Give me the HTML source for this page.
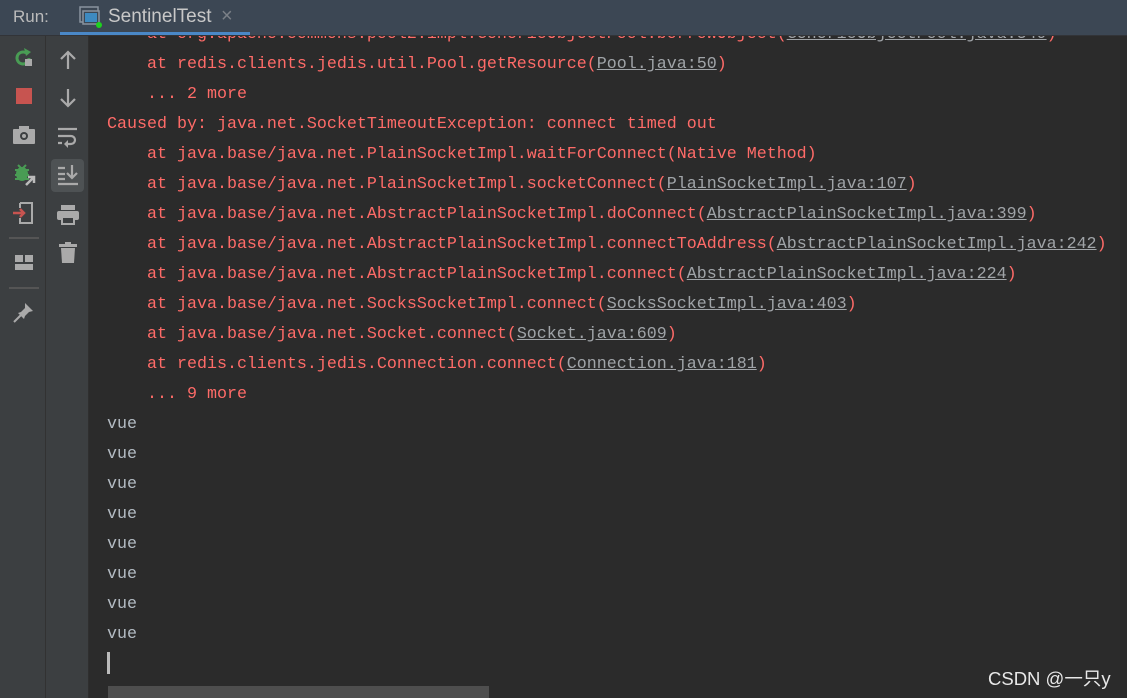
<!DOCTYPE html>
<html><head><meta charset="utf-8"><style>
body{margin:0;width:1127px;height:698px;background:#2b2b2b;overflow:hidden;position:relative;font-family:"Liberation Sans",sans-serif}
.hdr{position:absolute;left:0;top:0;width:1127px;height:35px;background:#3c4754;border-bottom:1px solid #323438}
.run{position:absolute;left:13px;top:7px;color:#bbb;font-size:17px}
.tab{position:absolute;left:108px;top:6px;color:#c8c8c8;font-size:19px}
.x{position:absolute;left:221px;top:5px;color:#7b8087;font-size:20px}
.ul{position:absolute;left:60px;top:32px;width:190px;height:3px;background:#4a88c7}
.tb1{position:absolute;left:0;top:36px;width:45px;height:662px;background:#3c3f41;border-right:1px solid #323232}
.tb2{position:absolute;left:46px;top:36px;width:42px;height:662px;background:#3c3f41;border-right:1px solid #2f2f2f}
.con{position:absolute;left:107px;top:20px;font-family:"Liberation Mono",monospace;font-size:16.67px;line-height:30px;white-space:pre;color:#ff6b68}
.l{color:#a0a4a8;text-decoration:underline}
.v{color:#b4bcc4}
.cur{position:absolute;left:107px;top:652px;width:3px;height:22px;background:#bbb}
.sb{position:absolute;left:108px;top:686px;width:381px;height:12px;background:#4e4e4e}
.wm{position:absolute;left:988px;top:665px;color:#e8e8e8;font-size:18.5px;font-family:"Liberation Sans","Noto Sans CJK SC",sans-serif}
svg{position:absolute}
</style></head><body>
<div class="con">    at org.apache.commons.pool2.impl.GenericObjectPool.borrowObject(<span class="l">GenericObjectPool.java:349</span>)
    at redis.clients.jedis.util.Pool.getResource(<span class="l">Pool.java:50</span>)
    ... 2 more
Caused by: java.net.SocketTimeoutException: connect timed out
    at java.base/java.net.PlainSocketImpl.waitForConnect(Native Method)
    at java.base/java.net.PlainSocketImpl.socketConnect(<span class="l">PlainSocketImpl.java:107</span>)
    at java.base/java.net.AbstractPlainSocketImpl.doConnect(<span class="l">AbstractPlainSocketImpl.java:399</span>)
    at java.base/java.net.AbstractPlainSocketImpl.connectToAddress(<span class="l">AbstractPlainSocketImpl.java:242</span>)
    at java.base/java.net.AbstractPlainSocketImpl.connect(<span class="l">AbstractPlainSocketImpl.java:224</span>)
    at java.base/java.net.SocksSocketImpl.connect(<span class="l">SocksSocketImpl.java:403</span>)
    at java.base/java.net.Socket.connect(<span class="l">Socket.java:609</span>)
    at redis.clients.jedis.Connection.connect(<span class="l">Connection.java:181</span>)
    ... 9 more
<span class="v">vue
vue
vue
vue
vue
vue
vue
vue</span></div>
<div class="hdr"><span class="run">Run:</span>
<svg style="left:79px;top:6px" width="24" height="22"><rect x="1" y="1" width="18" height="15" fill="none" stroke="#8a949e" stroke-width="1.5"/><rect x="4" y="5" width="16" height="13" fill="#3c4754" stroke="#8a949e" stroke-width="1.5"/><rect x="6" y="7" width="12" height="9" fill="#3d8ac0"/><circle cx="20" cy="19" r="3" fill="#1ed21e"/></svg>
<span class="tab">SentinelTest</span><span class="x">×</span><div class="ul"></div></div>
<div class="tb1"></div><div class="tb2"></div>
<svg style="left:12px;top:46px" width="24" height="24"><path d="M17 12a6 6 0 1 1-3-5.2" fill="none" stroke="#499c54" stroke-width="3"/><path d="M12 2l7 4-5 4z" fill="#499c54"/><rect x="13" y="13" width="7" height="7" fill="#aaa"/></svg>
<svg style="left:15px;top:87px" width="18" height="18"><rect x="1" y="1" width="16" height="16" fill="#c75450"/></svg>
<svg style="left:12px;top:125px" width="24" height="20"><rect x="1" y="4" width="22" height="15" rx="1" fill="#aaa"/><rect x="7" y="1" width="10" height="4" fill="#aaa"/><circle cx="12" cy="11" r="4" fill="#3c3f41"/><circle cx="12" cy="11" r="2" fill="#aaa"/></svg>
<svg style="left:12px;top:162px" width="26" height="26"><ellipse cx="10" cy="12" rx="6" ry="7" fill="#499c54"/><path d="M3 8h14M3 13h14M3 17h14M6 3l3 3M14 3l-3 3" stroke="#499c54" stroke-width="2"/><path d="M14 23l8-8M16 15h6v6" stroke="#bbb" stroke-width="2.5" fill="none"/></svg>
<svg style="left:12px;top:201px" width="24" height="24"><path d="M8 2h12v20H8v-5M8 7V2" fill="none" stroke="#aaa" stroke-width="2"/><path d="M1 12h11M8 8l4 4-4 4" fill="none" stroke="#c75450" stroke-width="2.5"/></svg>
<div style="position:absolute;left:9px;top:237px;width:30px;height:2px;background:#555"></div>
<svg style="left:14px;top:254px" width="20" height="18"><rect x="1" y="1" width="8" height="7" fill="#aaa"/><rect x="11" y="1" width="8" height="7" fill="#aaa"/><rect x="1" y="10" width="18" height="6" fill="#aaa"/></svg>
<div style="position:absolute;left:9px;top:287px;width:30px;height:2px;background:#555"></div>
<svg style="left:12px;top:300px" width="24" height="24"><path d="M13 3l8 8-4 1-4 4-1 3-6-6 3-1 4-4z" fill="#aaa"/><path d="M9 15L2 22" stroke="#aaa" stroke-width="2"/></svg>
<svg style="left:58px;top:49px" width="20" height="22"><path d="M10 20V3M3 10l7-7 7 7" fill="none" stroke="#aaa" stroke-width="2.2"/></svg>
<svg style="left:58px;top:87px" width="20" height="22"><path d="M10 2v17M3 12l7 7 7-7" fill="none" stroke="#aaa" stroke-width="2.2"/></svg>
<svg style="left:57px;top:126px" width="22" height="22"><path d="M1 3h19M1 10h13a4 4 0 0 1 0 8h-5M1 17h4" fill="none" stroke="#aaa" stroke-width="2.2"/><path d="M11 14l-4 4 4 4z" fill="#aaa"/></svg>
<div style="position:absolute;left:51px;top:159px;width:33px;height:33px;background:#4e5254;border-radius:4px"></div>
<svg style="left:57px;top:164px" width="22" height="22"><path d="M1 4h7M1 10h7M1 15h7M1 20h20M15 1v13M10 9l5 5 5-5" fill="none" stroke="#aaa" stroke-width="2.2"/></svg>
<svg style="left:56px;top:204px" width="24" height="22"><rect x="5" y="1" width="14" height="5" fill="#aaa"/><rect x="1" y="7" width="22" height="9" rx="2" fill="#aaa"/><rect x="6" y="13" width="12" height="7" fill="#3c3f41" stroke="#aaa" stroke-width="2"/></svg>
<svg style="left:59px;top:242px" width="18" height="22"><rect x="0" y="2" width="18" height="3" fill="#aaa"/><rect x="6" y="0" width="6" height="3" fill="#aaa"/><path d="M2 6h14l-1 15H3z" fill="#aaa"/></svg>
<div class="cur"></div><div class="sb"></div>
<div class="wm">CSDN @一只y</div>
</body></html>
